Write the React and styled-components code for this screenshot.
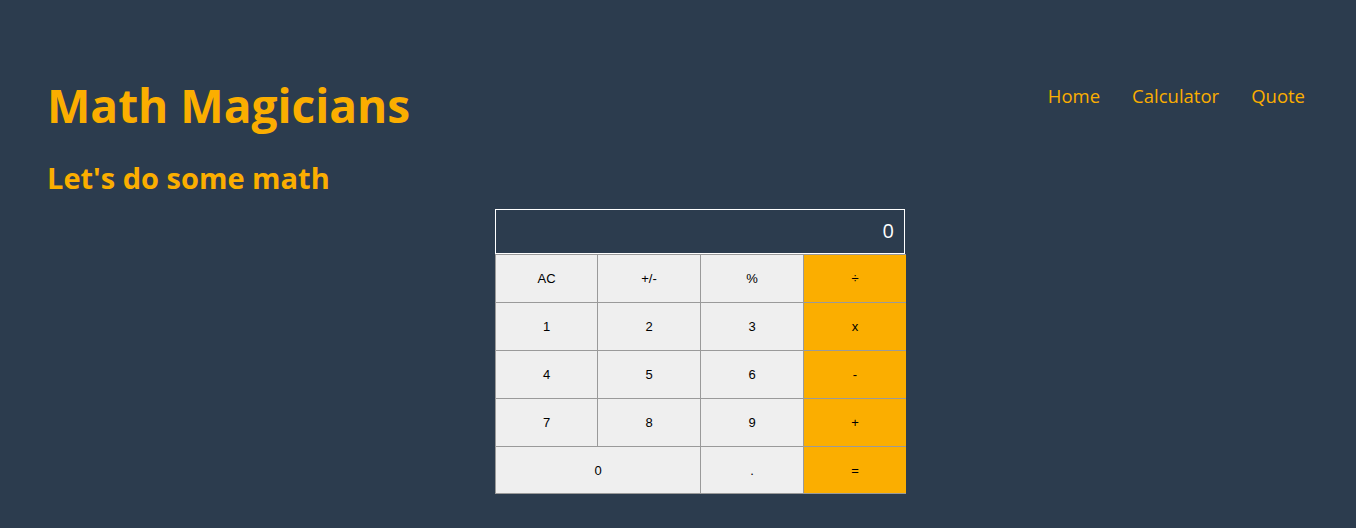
import React, { useState } from "react";
import styled, { createGlobalStyle } from "styled-components";

const GlobalReset = createGlobalStyle`
  html,
  body,
  #root {
    margin: 0;
    padding: 0;
    box-sizing: border-box;
  }
  body {
    background-color: #2c3c4e;
    font-family: "Comic Sans MS", "Open Sans", "DejaVu Sans", sans-serif;
  }`;

const Page = styled.div`
  width: 100%;
  min-height: 100vh;
  background-color: #2c3c4e;
  color: #fbae00;
`;

const Header = styled.header`
  display: flex;
  justify-content: space-between;
  align-items: flex-start;
  padding: 74px 51px 0 47px;
`;

const Title = styled.h1`
  margin: 0;
  font-size: 46px;
  font-weight: 700;
  letter-spacing: 0;
  line-height: 62px;
`;

const Nav = styled.nav`
  display: flex;
  gap: 32px;
  padding-top: 9px;
`;

const NavLink = styled.a`
  font-size: 18.5px;
  color: #fbae00;
  text-decoration: none;
  cursor: pointer;
`;

const Subtitle = styled.h2`
  margin: 24px 0 0 47px;
  font-size: 29px;
  font-weight: 700;
  line-height: 36px;
`;

const Main = styled.main`
  display: flex;
  justify-content: center;
  padding: 13px 0 0 45px;
`;

const Calculator = styled.div`
  width: 411px;
  display: grid;
  grid-template-columns: 102px 103px 103px 103px;
`;

const Display = styled.div`
  grid-column: 1 / -1;
  height: 45px;
  width: 410px;
  box-sizing: border-box;
  border: 1px solid #ffffff;
  display: flex;
  align-items: flex-end;
  justify-content: flex-end;
  padding: 0 10px 9px 0;
  color: #ffffff;
  font-size: 20px;
  font-weight: 500;
`;

const Key = styled.button`
  height: 48px;
  box-sizing: border-box;
  border: none;
  border-left: 1px solid #9a9a9a;
  border-top: 1px solid #9a9a9a;
  border-bottom: ${(p) => (p.$last ? "1px solid #9a9a9a" : "none")};
  background-color: ${(p) => (p.$op ? "#fbae00" : "#efefef")};
  grid-column: ${(p) => (p.$wide ? "span 2" : "auto")};
  font-family: "Liberation Sans", Arial, sans-serif;
  font-size: 13px;
  color: #000000;
  padding: 0;
  cursor: pointer;
`;

const rows = [
  ["AC", "+/-", "%", "÷"],
  ["1", "2", "3", "x"],
  ["4", "5", "6", "-"],
  ["7", "8", "9", "+"],
  ["0", ".", "="],
];

const App = () => {
  const [total, setTotal] = useState("0");

  const press = (label) => {
    if (label === "AC") setTotal("0");
  };

  return (
    <>
      <GlobalReset />
      <Page>
        <Header>
          <Title>Math Magicians</Title>
          <Nav>
            <NavLink>Home</NavLink>
            <NavLink>Calculator</NavLink>
            <NavLink>Quote</NavLink>
          </Nav>
        </Header>
        <Subtitle>Let's do some math</Subtitle>
        <Main>
          <Calculator>
            <Display>{total}</Display>
            {rows.map((row, r) =>
              row.map((label, i) => (
                <Key
                  key={label}
                  $op={i === row.length - 1}
                  $wide={label === "0"}
                  $last={r === rows.length - 1}
                  onClick={() => press(label)}
                >
                  {label}
                </Key>
              ))
            )}
          </Calculator>
        </Main>
      </Page>
    </>
  );
};

export default App;
